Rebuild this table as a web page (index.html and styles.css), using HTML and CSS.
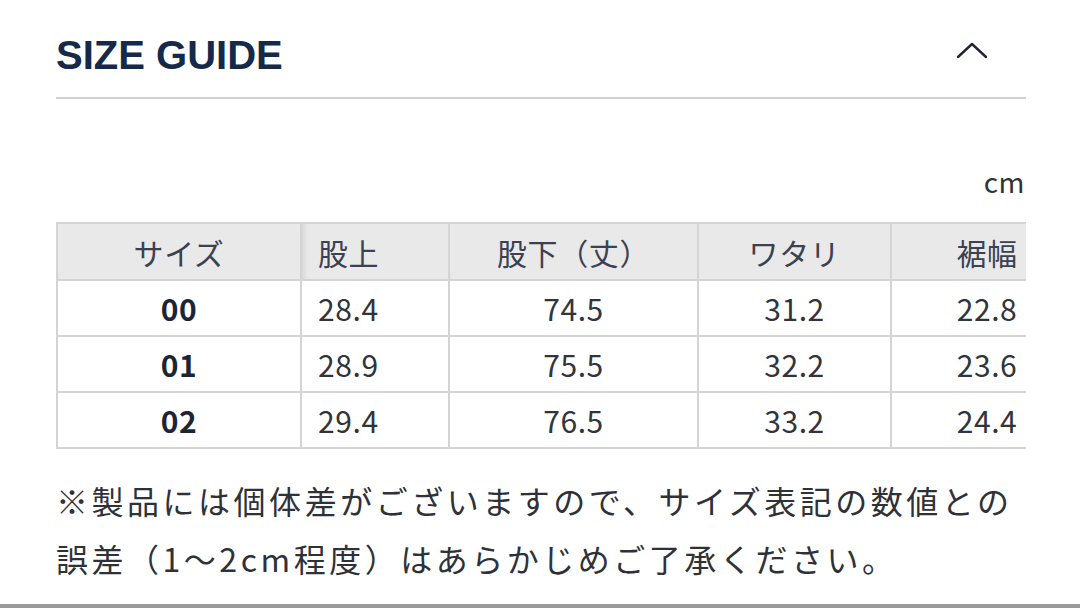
FILE: index.html
```html
<!DOCTYPE html>
<html lang="ja">
<head>
<meta charset="utf-8">
<title>SIZE GUIDE</title>
<link rel="stylesheet" href="styles.css">
</head>
<body>
<section class="guide">
  <header class="guide-head">
    <h2 class="guide-title">SIZE GUIDE</h2>
    <svg class="chevron" width="32" height="18" viewBox="0 0 32 18" aria-hidden="true">
      <path d="M2 16 L16 3 L30 16" fill="none" stroke="#1f2630" stroke-width="2.4" stroke-linecap="round" stroke-linejoin="round"/>
    </svg>
  </header>
  <div class="unit">cm</div>
  <div class="table-wrap">
    <table class="size-table">
      <thead>
        <tr>
          <th class="c-size">サイズ</th>
          <th class="c-rise left">股上</th>
          <th class="c-inseam">股下（丈）</th>
          <th class="c-thigh">ワタリ</th>
          <th class="c-hem">裾幅</th>
        </tr>
      </thead>
      <tbody>
        <tr><td class="size">00</td><td class="left">28.4</td><td>74.5</td><td>31.2</td><td>22.8</td></tr>
        <tr><td class="size">01</td><td class="left">28.9</td><td>75.5</td><td>32.2</td><td>23.6</td></tr>
        <tr><td class="size">02</td><td class="left">29.4</td><td>76.5</td><td>33.2</td><td>24.4</td></tr>
      </tbody>
    </table>
  </div>
  <p class="note">※製品には個体差がございますので、サイズ表記の数値との誤差（1〜2cm程度）はあらかじめご了承ください。</p>
</section>
<div class="next-rule"></div>
</body>
</html>
```
FILE: styles.css
```css
html, body {
  margin: 0;
  padding: 0;
  background: #ffffff;
}
body {
  width: 1080px;
  height: 608px;
  overflow: hidden;
  font-family: "Noto Sans CJK JP", "Noto Sans", sans-serif;
  color: #2e3138;
}
.guide {
  padding: 0 54px 0 56px;
  height: 604px;
  box-sizing: border-box;
}
.guide-head {
  display: flex;
  justify-content: space-between;
  align-items: flex-start;
  padding: 35px 0 22px;
  border-bottom: 2px solid #d2d2d2;
}
.guide-title {
  margin: 0;
  font-family: "Liberation Sans", Arial, sans-serif;
  font-weight: 700;
  font-size: 40px;
  line-height: 40px;
  color: #15294a;
  letter-spacing: 0;
}
.chevron {
  margin-top: 6px;
  margin-right: 38px;
}
.unit {
  text-align: right;
  font-size: 28px;
  line-height: 40px;
  margin-top: 62px;
  margin-right: 1px;
  color: #2f333a;
  letter-spacing: 0.02em;
}
.table-wrap {
  margin-top: 21px;
  overflow: hidden;
  width: 970px;
}
.size-table {
  border-collapse: separate;
  border-spacing: 0;
  table-layout: fixed;
  width: 1028px;
  font-size: 30px;
  letter-spacing: 0.02em;
}
.size-table th,
.size-table td {
  box-sizing: border-box;
  border-right: 2px solid #d4d4d4;
  border-bottom: 2px solid #d4d4d4;
  text-align: center;
  padding: 0 16px;
  white-space: nowrap;
}
.size-table th {
  height: 59px;
  border-top: 2px solid #d4d4d4;
  background: #e9e9ea;
  font-weight: 400;
  color: #3b4150;
}
.size-table td {
  height: 56px;
  color: #31343b;
}
.size-table th:first-child,
.size-table td:first-child {
  border-left: 2px solid #d4d4d4;
}
.size-table .left {
  text-align: left;
}
.size-table th.c-rise {
  box-shadow: inset 6px 0 6px -5px rgba(0, 0, 0, 0.12);
}
.c-size { width: 246px; }
.c-rise { width: 148px; }
.c-inseam { width: 249px; }
.c-thigh { width: 193px; }
.c-hem { width: 192px; }
.size-table td.size {
  font-weight: 700;
  color: #1c2535;
}
.note {
  margin: 22px 0 0;
  font-size: 32px;
  line-height: 58px;
  letter-spacing: 0.11em;
  color: #2e3138;
}
.next-rule {
  height: 4px;
  background: #9a9a9a;
}
```
